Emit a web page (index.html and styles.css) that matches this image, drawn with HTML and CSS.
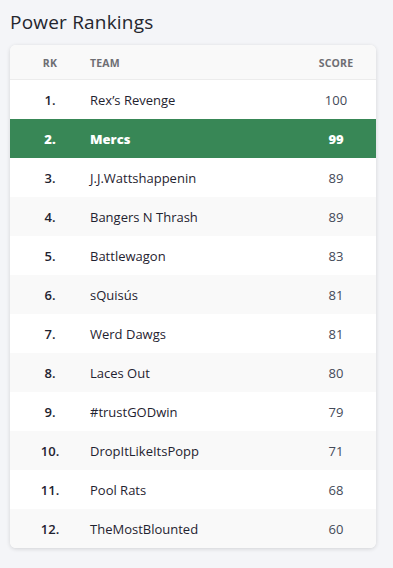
FILE: index.html
```html
<!DOCTYPE html>
<html lang="en">
<head>
<meta charset="utf-8">
<title>Power Rankings</title>
<link rel="stylesheet" href="styles.css">
</head>
<body>
<main class="page">
  <h1 class="title">Power Rankings</h1>
  <section class="card">
    <div class="row head">
      <div class="rk">RK</div>
      <div class="team">TEAM</div>
      <div class="score">SCORE</div>
    </div>
    <div class="row"><div class="rk">1.</div><div class="team">Rex’s Revenge</div><div class="score">100</div></div>
    <div class="row mine"><div class="rk">2.</div><div class="team">Mercs</div><div class="score">99</div></div>
    <div class="row"><div class="rk">3.</div><div class="team">J.J.Wattshappenin</div><div class="score">89</div></div>
    <div class="row alt"><div class="rk">4.</div><div class="team">Bangers N Thrash</div><div class="score">89</div></div>
    <div class="row"><div class="rk">5.</div><div class="team">Battlewagon</div><div class="score">83</div></div>
    <div class="row alt"><div class="rk">6.</div><div class="team">sQuisús</div><div class="score">81</div></div>
    <div class="row"><div class="rk">7.</div><div class="team">Werd Dawgs</div><div class="score">81</div></div>
    <div class="row alt"><div class="rk">8.</div><div class="team">Laces Out</div><div class="score">80</div></div>
    <div class="row"><div class="rk">9.</div><div class="team">#trustGODwin</div><div class="score">79</div></div>
    <div class="row alt"><div class="rk">10.</div><div class="team">DropItLikeItsPopp</div><div class="score">71</div></div>
    <div class="row"><div class="rk">11.</div><div class="team">Pool Rats</div><div class="score">68</div></div>
    <div class="row alt"><div class="rk">12.</div><div class="team">TheMostBlounted</div><div class="score">60</div></div>
  </section>
</main>
</body>
</html>
```
FILE: styles.css
```css
* { box-sizing: border-box; }
html, body { margin: 0; padding: 0; }
body {
  background: #f4f5f8;
  font-family: "Open Sans", "Noto Sans", sans-serif;
  color: #1f2330;
}
.page {
  padding: 9px 17px 20px 10px;
}
.title {
  margin: 0;
  font-size: 19px;
  font-weight: 400;
  line-height: 27px;
  color: #24262e;
  letter-spacing: 0.2px;
}
.card {
  margin-top: 9px;
  background: #fff;
  border-radius: 6px;
  box-shadow: 0 1px 4px rgba(0,0,0,0.14);
  overflow: hidden;
}
.row {
  display: grid;
  grid-template-columns: 80px 1fr 80px;
  align-items: center;
  height: 39px;
  font-size: 13px;
}
.row.alt { background: #f9f9f9; }
.row.head {
  height: 35px;
  background: #f9f9f9;
  border-bottom: 1px solid #ececec;
  font-size: 10.5px;
  font-weight: 700;
  color: #6e6e73;
  letter-spacing: 0.2px;
  padding-top: 1px;
}
.rk { text-align: center; font-weight: 600; }
.head .rk { font-weight: 700; }
.score { text-align: center; color: #444a58; }
.head .score { color: #6e6e73; }
.row.mine {
  background: #388756;
  color: #fff;
  font-weight: 800;
}
.row.mine .rk { font-weight: 800; }
.row.mine .score { color: #fff; }
```
